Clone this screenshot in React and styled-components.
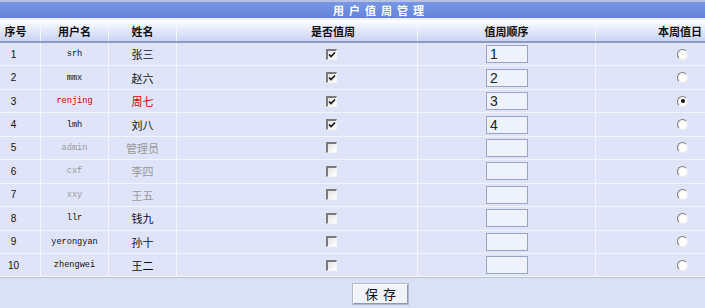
import styled, { createGlobalStyle } from "styled-components";

const GlobalStyle = createGlobalStyle`
  body {
    margin: 0;
    background: #d9e1f6;
    font-family: "Noto Sans CJK SC", "Liberation Sans", sans-serif;
    font-size: 12px;
  }
`;

const users = [
  { id: 1, login: "srh", name: "张三", duty: true, order: "1" },
  { id: 2, login: "mmx", name: "赵六", duty: true, order: "2" },
  { id: 3, login: "renjing", name: "周七", duty: true, order: "3", today: true },
  { id: 4, login: "lmh", name: "刘八", duty: true, order: "4" },
  { id: 5, login: "admin", name: "管理员", off: true },
  { id: 6, login: "cxf", name: "李四", off: true },
  { id: 7, login: "xxy", name: "王五", off: true },
  { id: 8, login: "llr", name: "钱九" },
  { id: 9, login: "yerongyan", name: "孙十" },
  { id: 10, login: "zhengwei", name: "王二" },
];

const cols = "41px 68px 68px 241px 178px 1fr";

const fonts = {
  cjk: '"Noto Sans CJK SC", "Liberation Sans", sans-serif',
  mono: '"Liberation Mono", "DejaVu Sans Mono", monospace',
  num: '"Liberation Sans", Arial, sans-serif',
};

const Page = styled.div`
  width: 705px;
  height: 308px;
  background: #d9e1f6;
  display: flex;
  flex-direction: column;
`;

const TitleBar = styled.div`
  height: 16px;
  border-top: 2px solid #b4c2e6;
  background: linear-gradient(#7896e4, #6582d8);
  color: #fff;
  font-weight: bold;
  font-size: 11px;
  letter-spacing: 5px;
  display: flex;
  align-items: center;
  padding-left: 333px;
  border-bottom: 2px solid #eef1fb;
`;

const HeadRow = styled.div`
  display: grid;
  grid-template-columns: ${cols};
  height: 21px;
  background: linear-gradient(#ffffff, #e8ecfb 40%, #c9d3f3);
  border-bottom: 2px solid #8d9bbf;
  font-weight: bold;
  font-size: 11px;
  color: #1a1a1a;
`;

const Row = styled.div`
  display: grid;
  grid-template-columns: ${cols};
  height: 23.45px;
  box-sizing: border-box;
  background: #dfe4f9;
  border-bottom: 1px solid #f3f5fd;
`;

const Cell = styled.div`
  display: flex;
  align-items: center;
  justify-content: ${(p) => p.$align || "center"};
  padding: ${(p) => p.$pad || "0"};
  border-right: ${(p) => (p.$last ? "none" : "1px solid #f4f6fd")};
  color: ${(p) => p.$color || "#111"};
  font-family: ${(p) => fonts[p.$font || "cjk"]};
  font-size: ${(p) => p.$size || "inherit"};
  overflow: hidden;
  white-space: nowrap;
`;

const Box = styled.span`
  width: 11px;
  height: 11px;
  box-sizing: border-box;
  border-top: 2px solid #7a7a7a;
  border-left: 2px solid #7a7a7a;
  border-right: 1px solid #f4f4f4;
  border-bottom: 1px solid #f4f4f4;
  background: linear-gradient(135deg, #e4e4e4, #ffffff);
  display: flex;
  align-items: center;
  justify-content: center;
`;

const Radio = styled.span`
  width: 11px;
  height: 11px;
  border-radius: 50%;
  box-sizing: border-box;
  border: 1px solid;
  border-color: #808080 #eeeeee #eeeeee #808080;
  background: radial-gradient(circle at 60% 60%, #ffffff 40%, #e6e6e6);
  display: flex;
  align-items: center;
  justify-content: center;
`;

const Dot = styled.span`
  width: 4px;
  height: 4px;
  border-radius: 50%;
  background: #111;
`;

const OrderInput = styled.input`
  width: 42px;
  height: 18px;
  box-sizing: border-box;
  border: 1px solid #97a6c6;
  background: #eef2fd;
  padding: 0 3px;
  font-family: "Liberation Sans", sans-serif;
  font-size: 14px;
  color: #222;
  outline: none;
`;

const Footer = styled.div`
  flex: 1;
  display: flex;
  justify-content: center;
  padding-top: 6px;
  border-top: 1px solid #b8c3de;
  background: #d9e1f6;
`;

const SaveButton = styled.button`
  width: 55px;
  height: 20px;
  margin-left: 56px;
  border: 1px solid;
  border-color: #ffffff #8c98b4 #8c98b4 #ffffff;
  outline: 1px solid #b0bad2;
  background: #f1f3fa;
  font-family: "Noto Sans CJK SC", sans-serif;
  font-size: 13px;
  letter-spacing: 5px;
  padding: 0 0 0 5px;
  line-height: 16px;
  color: #111;
`;

const Check = () => (
  <svg width="8" height="8" viewBox="0 0 8 8">
    <path d="M1 3.5 L3 5.5 L7 1.5" stroke="#111" strokeWidth="1.6" fill="none" />
  </svg>
);

const App = () => {
  return (
    <Page>
      <GlobalStyle />
      <TitleBar>用户值周管理</TitleBar>
      <HeadRow>
        <Cell $pad="0 11px 0 2px">序号</Cell>
        <Cell>用户名</Cell>
        <Cell>姓名</Cell>
        <Cell $align="flex-start" $pad="0 0 0 134px">是否值周</Cell>
        <Cell>值周顺序</Cell>
        <Cell $align="flex-end" $pad="0 3px 0 0" $last>本周值日</Cell>
      </HeadRow>
      {users.map((u) => {
        const color = u.today ? "#cc0000" : u.off ? "#9a9a9a" : "#111";
        return (
          <Row key={u.id}>
            <Cell $pad="0 13px 0 0" $font="num" $size="10px">{u.id}</Cell>
            <Cell $font="mono" $size="8.6px" $color={color}>{u.login}</Cell>
            <Cell $size="11px" $color={color}>{u.name}</Cell>
            <Cell $align="flex-start" $pad="0 0 0 149px">
              <Box>{u.duty && <Check />}</Box>
            </Cell>
            <Cell $pad="0 0 0 1px">
              <OrderInput defaultValue={u.order || ""} readOnly />
            </Cell>
            <Cell $align="flex-end" $pad="0 17px 0 0" $last>
              <Radio>{u.today && <Dot />}</Radio>
            </Cell>
          </Row>
        );
      })}
      <Footer>
        <SaveButton>保存</SaveButton>
      </Footer>
    </Page>
  );
};

export default App;
